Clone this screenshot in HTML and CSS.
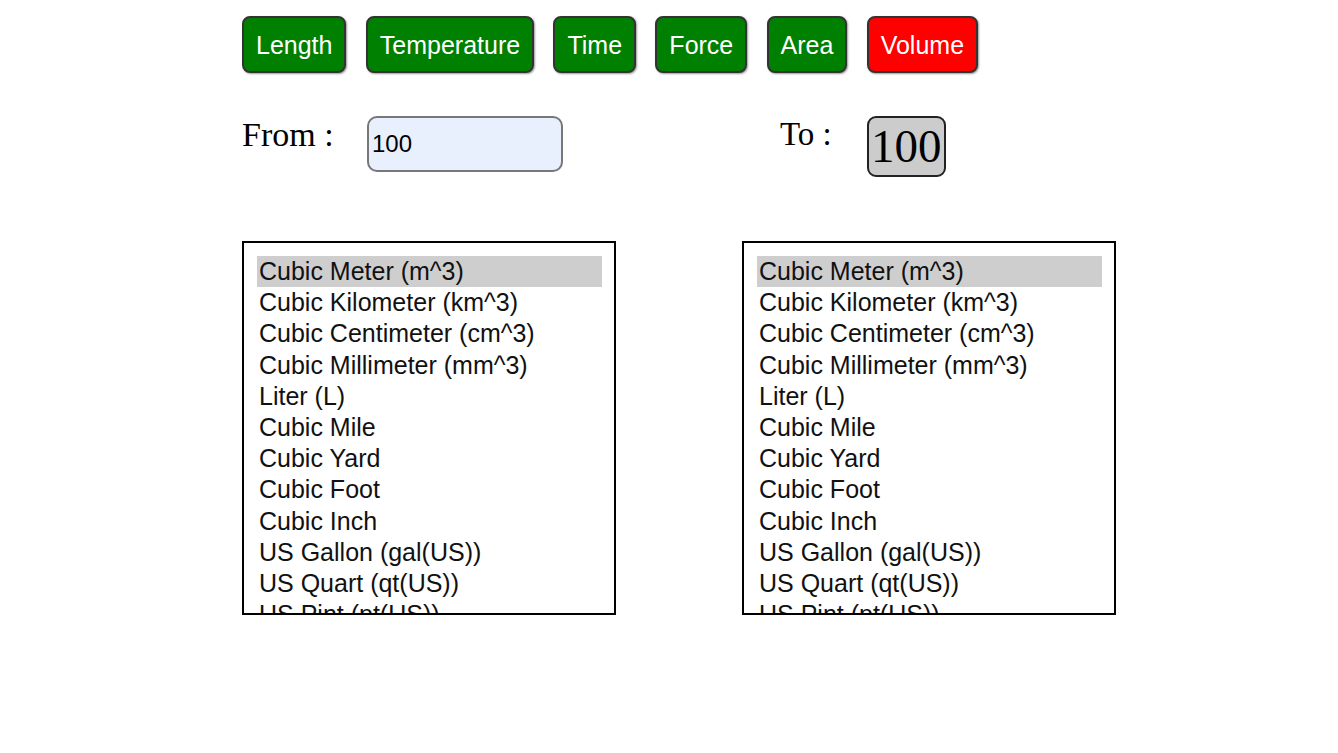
FILE: index.html
```html
<!DOCTYPE html>
<html>
<head>
<meta charset="utf-8">
<link rel="stylesheet" href="styles.css">
</head>
<body>
<div class="app">
  <div class="tabs">
    <button class="tab">Length</button>
    <button class="tab">Temperature</button>
    <button class="tab">Time</button>
    <button class="tab">Force</button>
    <button class="tab">Area</button>
    <button class="tab active">Volume</button>
  </div>
  <div class="io">
    <div class="col">
      <div class="row">
        <span class="label">From :</span>
        <input class="from-input" type="text" value="100">
      </div>
      <div class="list">
        <div class="item sel">Cubic Meter (m^3)</div>
        <div class="item">Cubic Kilometer (km^3)</div>
        <div class="item">Cubic Centimeter (cm^3)</div>
        <div class="item">Cubic Millimeter (mm^3)</div>
        <div class="item">Liter (L)</div>
        <div class="item">Cubic Mile</div>
        <div class="item">Cubic Yard</div>
        <div class="item">Cubic Foot</div>
        <div class="item">Cubic Inch</div>
        <div class="item">US Gallon (gal(US))</div>
        <div class="item">US Quart (qt(US))</div>
        <div class="item">US Pint (pt(US))</div>
      </div>
    </div>
    <div class="col">
      <div class="row">
        <span class="label to">To :</span>
        <span class="result">100</span>
      </div>
      <div class="list">
        <div class="item sel">Cubic Meter (m^3)</div>
        <div class="item">Cubic Kilometer (km^3)</div>
        <div class="item">Cubic Centimeter (cm^3)</div>
        <div class="item">Cubic Millimeter (mm^3)</div>
        <div class="item">Liter (L)</div>
        <div class="item">Cubic Mile</div>
        <div class="item">Cubic Yard</div>
        <div class="item">Cubic Foot</div>
        <div class="item">Cubic Inch</div>
        <div class="item">US Gallon (gal(US))</div>
        <div class="item">US Quart (qt(US))</div>
        <div class="item">US Pint (pt(US))</div>
      </div>
    </div>
  </div>
</div>
</body>
</html>
```
FILE: styles.css
```css
html, body {
  margin: 0;
  padding: 0;
  background: #fff;
}
.app {
  padding: 16px 0 0 242px;
}
.tabs {
  display: flex;
  gap: 19.3px;
}
.tab {
  font-family: "Liberation Sans", Arial, sans-serif;
  font-size: 25px;
  color: #fff;
  background: #008000;
  border: 2px solid #333;
  border-radius: 8px;
  padding: 1px 12px 0;
  height: 57px;
  box-shadow: 1px 1px 2px rgba(0,0,0,0.4);
  cursor: pointer;
}
.tab.active {
  background: #ff0000;
}
.io {
  display: flex;
  margin-top: 43px;
}
.col {
  width: 500px;
}
.row {
  display: flex;
  align-items: flex-start;
  height: 125px;
}
.label {
  font-family: "Liberation Serif", "Times New Roman", serif;
  font-size: 34px;
  width: 125px;
  color: #000;
}
.label.to {
  width: 87px;
  margin-left: 38px;
  font-size: 33px;
}
.from-input {
  box-sizing: border-box;
  width: 196px;
  height: 56px;
  font-family: "Liberation Sans", Arial, sans-serif;
  font-size: 24px;
  background: #e8f0fe;
  border: 2px solid #777;
  border-radius: 10px;
  padding: 0 3px;
  outline: none;
  color: #000;
}
.result {
  box-sizing: border-box;
  height: 61px;
  padding: 0 2px;
  background: #ccc;
  border: 2px solid #222;
  border-radius: 9px;
  font-family: "Liberation Serif", "Times New Roman", serif;
  font-size: 47px;
  line-height: 57px;
  color: #000;
}
.list {
  box-sizing: border-box;
  width: 374px;
  height: 374px;
  border: 2px solid #000;
  padding: 13px 12px 0 13px;
  overflow: hidden;
}
.item {
  font-family: "Liberation Sans", Arial, sans-serif;
  font-size: 25px;
  line-height: 31.2px;
  padding-left: 2px;
  color: #111;
  white-space: nowrap;
}
.item.sel {
  background: #cecece;
}
```
